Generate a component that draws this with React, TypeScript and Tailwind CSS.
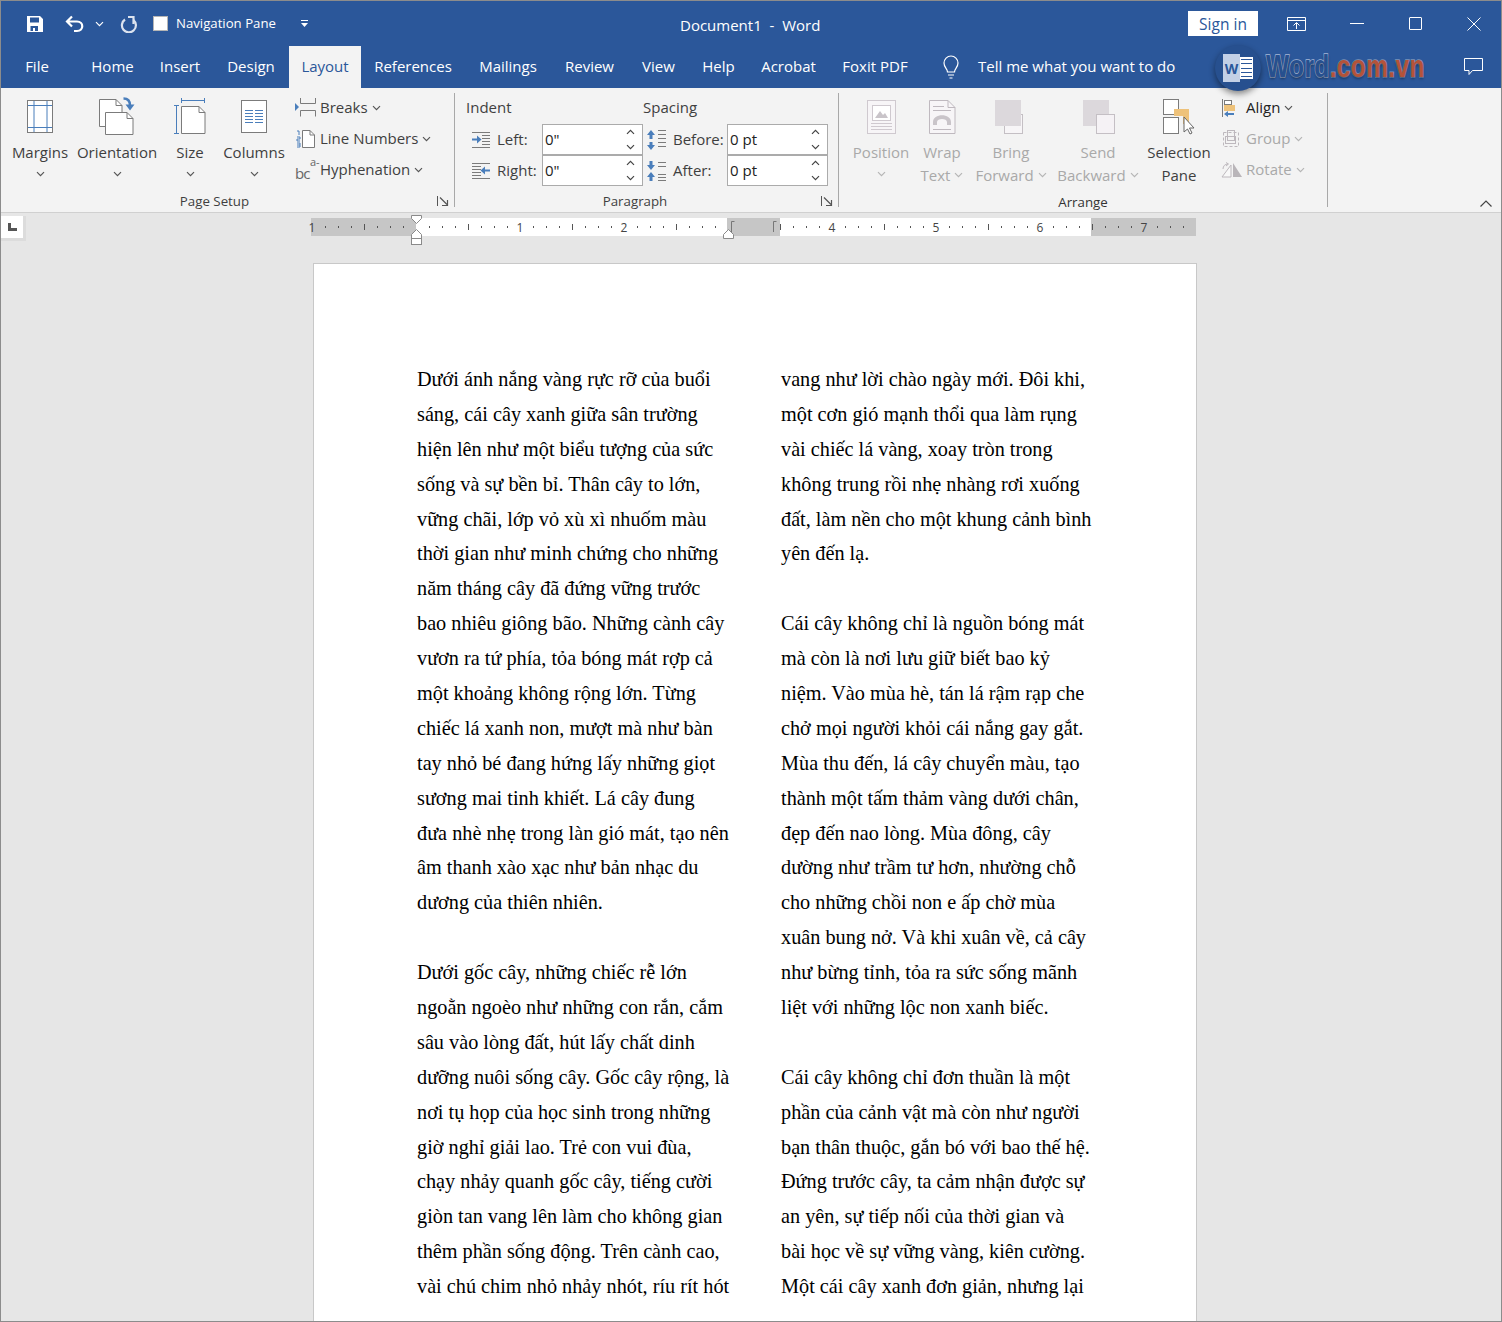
import type { ReactNode } from "react";

const iconBlue = "#4a7ebb";
const line = "#7b7b7b";

const leftColumn = [
  "Dưới ánh nắng vàng rực rỡ của buổi",
  "sáng, cái cây xanh giữa sân trường",
  "hiện lên như một biểu tượng của sức",
  "sống và sự bền bỉ. Thân cây to lớn,",
  "vững chãi, lớp vỏ xù xì nhuốm màu",
  "thời gian như minh chứng cho những",
  "năm tháng cây đã đứng vững trước",
  "bao nhiêu giông bão. Những cành cây",
  "vươn ra tứ phía, tỏa bóng mát rợp cả",
  "một khoảng không rộng lớn. Từng",
  "chiếc lá xanh non, mượt mà như bàn",
  "tay nhỏ bé đang hứng lấy những giọt",
  "sương mai tinh khiết. Lá cây đung",
  "đưa nhè nhẹ trong làn gió mát, tạo nên",
  "âm thanh xào xạc như bản nhạc du",
  "dương của thiên nhiên.",
  "",
  "Dưới gốc cây, những chiếc rễ lớn",
  "ngoằn ngoèo như những con rắn, cắm",
  "sâu vào lòng đất, hút lấy chất dinh",
  "dưỡng nuôi sống cây. Gốc cây rộng, là",
  "nơi tụ họp của học sinh trong những",
  "giờ nghỉ giải lao. Trẻ con vui đùa,",
  "chạy nhảy quanh gốc cây, tiếng cười",
  "giòn tan vang lên làm cho không gian",
  "thêm phần sống động. Trên cành cao,",
  "vài chú chim nhỏ nhảy nhót, ríu rít hót",
];

const rightColumn = [
  "vang như lời chào ngày mới. Đôi khi,",
  "một cơn gió mạnh thổi qua làm rụng",
  "vài chiếc lá vàng, xoay tròn trong",
  "không trung rồi nhẹ nhàng rơi xuống",
  "đất, làm nền cho một khung cảnh bình",
  "yên đến lạ.",
  "",
  "Cái cây không chỉ là nguồn bóng mát",
  "mà còn là nơi lưu giữ biết bao kỷ",
  "niệm. Vào mùa hè, tán lá rậm rạp che",
  "chở mọi người khỏi cái nắng gay gắt.",
  "Mùa thu đến, lá cây chuyển màu, tạo",
  "thành một tấm thảm vàng dưới chân,",
  "đẹp đến nao lòng. Mùa đông, cây",
  "dường như trầm tư hơn, nhường chỗ",
  "cho những chồi non e ấp chờ mùa",
  "xuân bung nở. Và khi xuân về, cả cây",
  "như bừng tỉnh, tỏa ra sức sống mãnh",
  "liệt với những lộc non xanh biếc.",
  "",
  "Cái cây không chỉ đơn thuần là một",
  "phần của cảnh vật mà còn như người",
  "bạn thân thuộc, gắn bó với bao thế hệ.",
  "Đứng trước cây, ta cảm nhận được sự",
  "an yên, sự tiếp nối của thời gian và",
  "bài học về sự vững vàng, kiên cường.",
  "Một cái cây xanh đơn giản, nhưng lại",
];

const tabs = [
  { label: "Home", w: "w-[69px]" },
  { label: "Insert", w: "w-[66px]" },
  { label: "Design", w: "w-[76px]" },
  { label: "Layout", w: "w-[72px]", active: true },
  { label: "References", w: "w-[104px]" },
  { label: "Mailings", w: "w-[86px]" },
  { label: "Review", w: "w-[77px]" },
  { label: "View", w: "w-[61px]" },
  { label: "Help", w: "w-[59px]" },
  { label: "Acrobat", w: "w-[81px]" },
  { label: "Foxit PDF", w: "w-[92px]" },
];

function Chevron({ color = "#555", up = false }: { color?: string; up?: boolean }) {
  return (
    <svg width="9" height="6" viewBox="0 0 9 6" fill="none" className="inline-block shrink-0">
      <path d={up ? "M1 4.8 4.5 1.3 8 4.8" : "M1 1.2 4.5 4.7 8 1.2"} stroke={color} strokeWidth="1.2" />
    </svg>
  );
}

function Launcher() {
  return (
    <svg width="12" height="12" viewBox="0 0 12 12" fill="none" stroke="#555">
      <path d="M.5 1v10" />
      <path d="M3 2.5 10 9.5M10.5 5v5.5H5" strokeWidth="1.2" />
    </svg>
  );
}

function BigButton({
  w,
  icon,
  lines,
  disabled,
  noChevron,
}: {
  w: string;
  icon: ReactNode;
  lines: string[];
  disabled?: boolean;
  noChevron?: boolean;
}) {
  const chevronColor = disabled ? "#b5b5b5" : "#555";
  return (
    <div className={`${w} flex flex-col items-center pt-[9px] ${disabled ? "text-[#a9a9a9]" : "text-[#3f3f3f]"}`}>
      <div className="h-[38px] w-[40px]">{icon}</div>
      <div className="mt-[6px] h-[23px] whitespace-nowrap leading-[22px]">{lines[0]}</div>
      {lines[1] ? (
        <div className="flex h-[22px] items-center gap-[4px] whitespace-nowrap leading-[22px]">
          {lines[1]}
          {!noChevron && <Chevron color={chevronColor} />}
        </div>
      ) : (
        <div className="mt-[1px] flex h-[18px] items-center">
          <Chevron color={chevronColor} />
        </div>
      )}
    </div>
  );
}

function SmallCommand({
  icon,
  label,
  disabled,
  dark,
}: {
  icon: ReactNode;
  label: string;
  disabled?: boolean;
  dark?: boolean;
}) {
  return (
    <div
      className={`flex h-[31px] items-center whitespace-nowrap ${
        disabled ? "text-[#a9a9a9]" : dark ? "text-[#222]" : "text-[#3f3f3f]"
      }`}
    >
      <div className="w-[25px] shrink-0">{icon}</div>
      <span>{label}</span>
      <span className="ml-[4px] flex">
        <Chevron color={disabled ? "#b5b5b5" : "#555"} />
      </span>
    </div>
  );
}

function NumberBox({ value }: { value: string }) {
  return (
    <div className="flex h-[31px] w-[101px] items-center justify-between border border-[#ababab] bg-white pl-[2px] pr-[7px] text-[#222]">
      <span>{value}</span>
      <div className="flex flex-col gap-[9px]">
        <Chevron color="#444" up />
        <Chevron color="#444" />
      </div>
    </div>
  );
}

function Separator() {
  return <div className="my-[5px] w-px shrink-0 bg-[#a8a8a8]" />;
}

function MarginsIcon() {
  return (
    <svg width="40" height="38" viewBox="0 0 40 38" fill="none">
      <rect x="7.5" y="3.5" width="25" height="32" fill="#fff" stroke={line} />
      <path d="M14 4v31M27 4v31M8 8.5h24M8 30.5h24" stroke={iconBlue} />
    </svg>
  );
}

function OrientationIcon() {
  return (
    <svg width="40" height="38" viewBox="0 0 40 38" fill="none" className="overflow-visible">
      <path d="M2.500 2.500H19l6 6v21H2.500z" fill="#fff" stroke={line} />
      <path d="M8.500 15.500H30l6 6v16H8.500z" fill="#fff" stroke={line} />
      <path d="M19 2.500v6h6M30 15.500v6h6" stroke={line} />
      <path d="M26.500 1.500c5 0 6.500 2.500 6.500 7" stroke={iconBlue} strokeWidth="2.500" />
      <path d="M28.500 7.500h9l-4.500 6z" fill={iconBlue} />
    </svg>
  );
}

function SizeIcon() {
  return (
    <svg width="40" height="38" viewBox="0 0 40 38" fill="none" className="overflow-visible">
      <path d="M11.500 9.500H29l6 6v21H11.500z" fill="#fff" stroke={line} />
      <path d="M29 9.500v6h6" stroke={line} />
      <path d="M6.500 8.500v28M4 8.500h5M4 36.500h5M11.500 3.500h23M11.500 1v5M34.500 1v5" stroke={iconBlue} />
    </svg>
  );
}

function ColumnsIcon() {
  return (
    <svg width="40" height="38" viewBox="0 0 40 38" fill="none">
      <rect x="7.500" y="3.500" width="25" height="32" fill="#fff" stroke={line} />
      <path
        d="M11 13.500h8M21 13.500h8M11 16.500h8M21 16.500h8M11 19.500h8M21 19.500h8M11 22.500h8M21 22.500h8M11 25.500h8M21 25.500h8"
        stroke={iconBlue}
      />
    </svg>
  );
}

function PositionIcon() {
  return (
    <svg width="40" height="38" viewBox="0 0 40 38" fill="none" stroke="#cfc9cf">
      <rect x="6.500" y="3.500" width="28" height="33" fill="#f7f5f7" />
      <rect x="11.500" y="8.500" width="18" height="15" fill="#fff" />
      <path d="M14 21l5-7 3 4 2-2 3 5z" fill="#c9c4c9" stroke="none" />
      <path d="M10 26.500h21M10 29.500h21M10 32.500h21" />
    </svg>
  );
}

function WrapIcon() {
  return (
    <svg width="40" height="38" viewBox="0 0 40 38" fill="none" stroke="#bfb9bf">
      <path d="M7.500 3.500H26l7 7v26H7.500z" fill="#f7f5f7" />
      <path d="M26 3.500v7h7M11 9.500h11M11 13.500h18M11 32.500h18" />
      <path d="M11 28v-3c0-9 18-9 18 0v3h-4v-3c0-4-10-4-10 0v3z" fill="#c9c4c9" stroke="none" />
    </svg>
  );
}

function BringIcon() {
  return (
    <svg width="40" height="38" viewBox="0 0 40 38" fill="none">
      <rect x="13.500" y="17.500" width="18" height="19" fill="#f7f5f7" stroke="#c4bfc4" />
      <rect x="4" y="3" width="26" height="26" fill="#dcd8dc" />
    </svg>
  );
}

function SendIcon() {
  return (
    <svg width="40" height="38" viewBox="0 0 40 38" fill="none">
      <rect x="5" y="3" width="26" height="26" fill="#dcd8dc" />
      <rect x="18.500" y="17.500" width="18" height="19" fill="#f5f2f5" stroke="#c4bfc4" />
    </svg>
  );
}

function SelectionIcon() {
  return (
    <svg width="40" height="38" viewBox="0 0 40 38" fill="none">
      <rect x="4.500" y="2.500" width="15" height="15" fill="#fff" stroke={line} />
      <rect x="4.500" y="20.500" width="15" height="16" fill="#fff" stroke={line} />
      <path d="M15 12h15v15h-6V19h-9z" fill="#eec27a" />
      <path d="M25 20v15l3.500-3 2.500 5 2-1-2.500-5h4.500z" fill="#fff" stroke="#666" />
    </svg>
  );
}

function BreaksIcon() {
  return (
    <svg width="22" height="20" viewBox="0 0 22 20" fill="none" stroke={line}>
      <path d="M5.500 0v5.500h15V0M5.500 18.500V12.500h15v6" />
      <path d="M0 5v8l4-4z" fill={iconBlue} stroke="none" />
    </svg>
  );
}

function LineNumbersIcon() {
  return (
    <svg width="22" height="20" viewBox="0 0 22 20" fill="none">
      <path d="M7.500 1.500H15l4.500 4.500v12.500h-12z" fill="#fff" stroke={line} />
      <path d="M15 1.500V6h4.500" stroke={line} />
      <path d="M2 2h2v4M2 8h3v2H2v2h3M2 14h3v4H2M2 16h3" stroke={iconBlue} />
    </svg>
  );
}

function HyphenIcon() {
  return (
    <div className="relative h-[20px] w-[20px] text-[#666]">
      <span className="absolute left-0 top-[7px] text-[15px] leading-[13px] tracking-[-1px]">bc</span>
      <span className="absolute left-[15px] top-[-3px] text-[11px] leading-[10px]">a-</span>
    </div>
  );
}

function LeftIndentIcon() {
  return (
    <svg width="18" height="16" viewBox="0 0 18 16" fill="none" stroke={line}>
      <path d="M0 .5h18M10 3.500h8M10 6.500h8M10 9.500h8M10 12.500h8M0 15.500h18" />
      <path d="M0 6.500h5V3.500l4.500 4-4.500 4V8.500H0z" fill={iconBlue} stroke="none" />
    </svg>
  );
}

function RightIndentIcon() {
  return (
    <svg width="18" height="16" viewBox="0 0 18 16" fill="none" stroke={line}>
      <path d="M0 .5h18M0 3.500h9M0 6.500h9M0 9.500h9M0 12.500h9M0 15.500h18" />
      <path d="M18 6.500h-5V3.500l-4.500 4 4.500 4V8.500h5z" fill={iconBlue} stroke="none" />
    </svg>
  );
}

function SpaceBeforeIcon() {
  return (
    <svg width="19" height="20" viewBox="0 0 19 20" fill="none" stroke={line}>
      <path d="M11 .5h8M11 4.500h8M11 8.500h8M11 12.500h8M11 16.500h8" />
      <path d="M4 0l4 5H5.500v4h-3V5H0zM4 20l4-5H5.500v-3h-3v3H0z" fill={iconBlue} stroke="none" />
    </svg>
  );
}

function SpaceAfterIcon() {
  return (
    <svg width="19" height="20" viewBox="0 0 19 20" fill="none" stroke={line}>
      <path d="M11 1.500h8M11 5.500h8M11 13.500h8M11 16.500h8M11 19.500h8" />
      <path d="M4 9l4-5H5.500V0h-3v4H0zM4 11l4 5H5.500v4h-3v-4H0z" fill={iconBlue} stroke="none" />
    </svg>
  );
}

function AlignIcon() {
  return (
    <svg width="20" height="18" viewBox="0 0 20 18" fill="none">
      <path d="M1.500 0v18" stroke={line} />
      <rect x="3.500" y="1.500" width="7" height="4" fill="#fff" stroke={line} />
      <rect x="3" y="6" width="11" height="6" fill="#eec27a" />
      <path d="M3 15l4-3v2h6v2H7v2z" fill={iconBlue} />
    </svg>
  );
}

function GroupIcon() {
  return (
    <svg width="20" height="20" viewBox="0 0 20 20" fill="none" stroke="#bdb8bd">
      <rect x="2.500" y="3.500" width="15" height="14" strokeDasharray="3 2" />
      <rect x="6.500" y="1.500" width="7" height="10" />
      <rect x="4.500" y="7.500" width="10" height="7" />
    </svg>
  );
}

function RotateIcon() {
  return (
    <svg width="22" height="16" viewBox="0 0 22 16" fill="none">
      <path d="M12 1v14h9z" fill="#b9b5b9" />
      <path d="M10 3 1 15h9z" fill="#f8f8f8" stroke="#bdb8bd" />
      <path d="M2 7c0-3 2-5 5-5M5 .5 7.500 2 5 4" stroke="#bdb8bd" />
    </svg>
  );
}

function Ruler() {
  const numbers = [
    { x: 1, n: "1" },
    { x: 209, n: "1" },
    { x: 313, n: "2" },
    { x: 521, n: "4" },
    { x: 625, n: "5" },
    { x: 729, n: "6" },
    { x: 833, n: "7" },
  ];
  const dots: number[] = [];
  const ticks: number[] = [];
  for (let i = 0; i < 68; i++) {
    const x = 1 + i * 13;
    const inGap = x > 414 && x < 469;
    if (x === 105 || inGap || i % 8 === 0) continue;
    if (i % 4 === 0) ticks.push(x);
    else dots.push(x);
  }
  return (
    <div className="relative ml-[310px] flex h-[18px] w-[885px]">
      <div className="w-[105px] bg-[#c6c6c6]" />
      <div className="w-[311px] bg-white" />
      <div className="w-[53px] bg-[#c6c6c6]" />
      <div className="w-[311px] bg-white" />
      <div className="w-[105px] bg-[#c6c6c6]" />
      <svg
        width="890"
        height="36"
        viewBox="0 0 890 36"
        fill="none"
        className="absolute left-0 top-[-5px] overflow-visible"
      >
        {ticks.map((x) => (
          <path key={`t${x}`} d={`M${x + 0.5} 11v6`} stroke="#555" />
        ))}
        {dots.map((x) => (
          <rect key={`d${x}`} x={x} y="13" width="1" height="2" fill="#555" />
        ))}
        {numbers.map((item) => (
          <text key={item.x} x={item.x} y="19" textAnchor="middle" fontSize="12" fill="#444" fontFamily="Open Sans, sans-serif">
            {item.n}
          </text>
        ))}
        <path d="M100.500 2.500h10v3l-5 5-5-5z" fill="#fff" stroke="#8a8a8a" />
        <path d="M105.500 16.500l5 5v4h-10v-4z" fill="#fff" stroke="#8a8a8a" />
        <rect x="100.500" y="25.500" width="10" height="6" fill="#fff" stroke="#8a8a8a" />
        <path d="M417.500 16.500l5 5v4h-10v-4z" fill="#fff" stroke="#8a8a8a" />
        <path d="M420.500 19V8.500h3M462.500 19V8.500h3" stroke="#777" />
      </svg>
    </div>
  );
}

function TextColumn({ lines, className }: { lines: string[]; className?: string }) {
  return (
    <div className={className}>
      {lines.map((text, i) => (
        <div key={i} className="h-[34.9px] whitespace-nowrap leading-[34.9px]">
          {text || "\u00a0"}
        </div>
      ))}
    </div>
  );
}

export default function App() {
  return (
    <div className="h-[1322px] w-[1502px] overflow-hidden border border-[#8c8c8c] bg-[#e6e6e6] font-['Open_Sans',sans-serif] text-[15px]">
      {/* title bar */}
      <div className="relative flex h-[45px] items-center bg-[#2b579a] text-white">
        <svg width="18" height="18" viewBox="0 0 18 18" fill="#fff" className="ml-[25px]">
          <path d="M1 1h13l3 3v13H1zM4 2.500v5h9v-5zM4.500 11v5h2.500v-3h2v3h3v-5z" fillRule="evenodd" />
        </svg>
        <svg width="20" height="18" viewBox="0 0 20 18" fill="none" stroke="#fff" strokeWidth="2.200" className="ml-[21px]">
          <path d="M7 1.500 2 6.500l5 5M2 6.500h10c7 0 7 9.500 0 9.500H9" />
        </svg>
        <span className="ml-[10px] flex">
          <Chevron color="#fff" />
        </span>
        <svg width="18" height="18" viewBox="0 0 18 18" fill="none" stroke="#dce3ef" strokeWidth="2.200" className="ml-[16px]">
          <path d="M5 4.500A7 7 0 1 0 13.500 5" />
          <path d="M8 2h5.500v7" />
        </svg>
        <div className="ml-[15px] h-[15px] w-[15px] border border-[#b5b5b5] bg-white" />
        <span className="ml-[8px] pt-[1px] text-[13.2px]">Navigation Pane</span>
        <svg width="7" height="8" viewBox="0 0 7 8" fill="#fff" className="ml-[25px]">
          <path d="M0 0h7v1H0zM0 3h7L3.500 7z" />
        </svg>
        <div className="absolute left-[679px] top-[14px] whitespace-pre leading-[20px]">Document1  -  Word</div>
        <div className="ml-auto mr-[29px] flex h-[25px] w-[70px] items-center justify-center bg-white pt-[2px] text-[15.5px] text-[#2b579a]">
          Sign in
        </div>
        <svg width="19" height="14" viewBox="0 0 19 14" fill="none" stroke="#fff" className="mr-[44px]">
          <path d="M.5.500h18v13H.500zM.5 3.500h18M9.500 12V6M6.500 8.500l3-3 3 3" />
        </svg>
        <div className="mr-[45px] h-px w-[14px] bg-white" />
        <div className="mr-[45px] h-[13px] w-[13px] rounded-[1px] border border-white" />
        <svg width="14" height="14" viewBox="0 0 14 14" stroke="#fff" className="mr-[20px]">
          <path d="M.5.500l13 13M13.500.500l-13 13" />
        </svg>
      </div>

      {/* tabs */}
      <div className="relative flex h-[42px] items-stretch bg-[#2b579a] text-white">
        <div className="ml-[10px] flex w-[52px] items-center justify-center pb-[1px]">File</div>
        <div className="w-[15px]" />
        {tabs.map((tab) => (
          <div
            key={tab.label}
            className={`${tab.w} flex items-center justify-center whitespace-nowrap pb-[1px] ${
              tab.active ? "bg-[#f3f3f3] text-[#2b579a]" : ""
            }`}
          >
            {tab.label}
          </div>
        ))}
        <div className="ml-[21px] flex items-center">
          <svg width="18" height="24" viewBox="0 0 18 24" fill="none" stroke="#fff" strokeWidth="1.200">
            <path d="M5.500 17c0-3-3.500-4.500-3.500-9a7 7 0 0 1 14 0c0 4.500-3.500 6-3.500 9zM6 20h6M7.500 23h3" />
          </svg>
        </div>
        <div className="ml-[18px] flex items-center pb-[1px]">Tell me what you want to do</div>

        {/* watermark over the bar */}
        <div className="absolute left-[1214px] top-[-1px] z-10 flex h-[46px] w-[46px] items-center justify-center rounded-full bg-[#27508f] shadow-[0_3px_6px_rgba(0,0,0,0.45)]">
          <div className="flex h-[28px] w-[30px] items-center">
            <div className="flex h-[28px] w-[17px] items-center justify-center bg-[#c3d0e6] text-[14px] font-bold text-[#2b579a]">
              W
            </div>
            <div className="flex h-[22px] w-[13px] flex-col justify-between bg-white px-[1px] py-[2px]">
              <div className="h-px bg-[#2b579a]" />
              <div className="h-px bg-[#2b579a]" />
              <div className="h-px bg-[#2b579a]" />
              <div className="h-px bg-[#2b579a]" />
              <div className="h-px bg-[#2b579a]" />
            </div>
          </div>
        </div>
        <div className="absolute left-[1265px] top-[1px] z-10 origin-left scale-x-[0.765] whitespace-nowrap font-['Liberation_Sans',sans-serif] text-[32px] font-bold leading-[38px] tracking-[0.5px] [paint-order:stroke_fill] [text-shadow:0_2px_3px_rgba(0,0,0,0.35)]">
          <span className="text-[#27508f] [-webkit-text-stroke:1.5px_#a7b9d8]">Word</span>
          <span className="text-[#b4533a] [-webkit-text-stroke:1.5px_#7f95b8]">.com.vn</span>
        </div>
        <svg width="19" height="18" viewBox="0 0 19 18" fill="none" stroke="#fff" className="absolute left-[1463px] top-[12px]">
          <path d="M.5.500h18v12H8.500l-3.500 4v-4H.500z" />
        </svg>
      </div>

      {/* ribbon */}
      <div className="relative flex h-[125px] border-b border-[#d0d0d0] bg-[#f3f3f3] text-[#3f3f3f]">
        <div className="flex w-[453px] shrink-0 flex-col">
          <div className="flex h-[102px]">
            <BigButton w="w-[78px]" icon={<MarginsIcon />} lines={["Margins"]} />
            <BigButton w="w-[76px]" icon={<OrientationIcon />} lines={["Orientation"]} />
            <BigButton w="w-[70px]" icon={<SizeIcon />} lines={["Size"]} />
            <BigButton w="w-[58px]" icon={<ColumnsIcon />} lines={["Columns"]} />
            <div className="ml-[12px] flex flex-col pt-[4px]">
              <SmallCommand icon={<BreaksIcon />} label="Breaks" />
              <SmallCommand icon={<LineNumbersIcon />} label="Line Numbers" />
              <SmallCommand icon={<HyphenIcon />} label="Hyphenation" />
            </div>
          </div>
          <div className="flex h-[22px] items-center pr-[5px] text-[13.3px]">
            <div className="mr-[9px] flex-1 pt-[2px] text-center">Page Setup</div>
            <Launcher />
          </div>
        </div>
        <Separator />

        <div className="flex w-[383px] shrink-0 flex-col">
          <div className="h-[102px] pl-[11px] pt-[9px]">
            <div className="flex h-[21px] items-center">
              <span className="w-[177px]">Indent</span>
              <span>Spacing</span>
            </div>
            <div className="mt-[6px] flex items-center">
              <div className="ml-[6px] w-[25px]">
                <LeftIndentIcon />
              </div>
              <span className="w-[45px]">Left:</span>
              <NumberBox value={'0"'} />
              <div className="ml-[4px] w-[26px]">
                <SpaceBeforeIcon />
              </div>
              <span className="w-[54px]">Before:</span>
              <NumberBox value="0 pt" />
            </div>
            <div className="flex items-center">
              <div className="ml-[6px] w-[25px]">
                <RightIndentIcon />
              </div>
              <span className="w-[45px]">Right:</span>
              <NumberBox value={'0"'} />
              <div className="ml-[4px] w-[26px]">
                <SpaceAfterIcon />
              </div>
              <span className="w-[54px]">After:</span>
              <NumberBox value="0 pt" />
            </div>
          </div>
          <div className="flex h-[22px] items-center pr-[5px] text-[13.3px]">
            <div className="mr-[6px] flex-1 pt-[2px] text-center">Paragraph</div>
            <Launcher />
          </div>
        </div>
        <Separator />

        <div className="flex w-[488px] shrink-0 flex-col">
          <div className="flex h-[102px] pl-[12px]">
            <BigButton w="w-[60px]" icon={<PositionIcon />} lines={["Position"]} disabled />
            <BigButton w="w-[62px]" icon={<WrapIcon />} lines={["Wrap", "Text"]} disabled />
            <BigButton w="w-[76px]" icon={<BringIcon />} lines={["Bring", "Forward"]} disabled />
            <BigButton w="w-[98px]" icon={<SendIcon />} lines={["Send", "Backward"]} disabled />
            <BigButton w="w-[64px]" icon={<SelectionIcon />} lines={["Selection", "Pane"]} noChevron />
            <div className="ml-[10px] flex flex-col pt-[4px]">
              <SmallCommand icon={<AlignIcon />} label="Align" dark />
              <SmallCommand icon={<GroupIcon />} label="Group" disabled />
              <SmallCommand icon={<RotateIcon />} label="Rotate" disabled />
            </div>
          </div>
          <div className="flex h-[22px] items-center justify-center pt-[4px] text-[13.3px] text-[#333]">Arrange</div>
        </div>
        <Separator />
        <div className="ml-auto mr-[9px] flex items-end pb-[5px]">
          <svg width="12" height="7" viewBox="0 0 12 7" fill="none" stroke="#444" strokeWidth="1.200">
            <path d="M.5 6.500 6 1l5.500 5.500" />
          </svg>
        </div>
      </div>

      {/* ruler */}
      <div className="relative h-[50px] bg-[#e6e6e6] pt-[5px]">
        <div className="absolute left-0 top-[3px] flex h-[25px] w-[25px] items-center justify-center border-b-[3px] border-r-[3px] border-[#dcdcdc] bg-white">
          <svg width="9" height="8" viewBox="0 0 9 8" fill="#555">
            <path d="M0 0h3v5h6v3H0z" />
          </svg>
        </div>
        <Ruler />
      </div>

      {/* page */}
      <div className="ml-[312px] h-[1100px] w-[884px] border border-[#c8c8c8] bg-white pt-[98px] font-['Liberation_Serif',serif] text-[20.25px] text-black">
        <div className="flex pl-[103px]">
          <TextColumn lines={leftColumn} className="w-[364px]" />
          <TextColumn lines={rightColumn} />
        </div>
      </div>
    </div>
  );
}
